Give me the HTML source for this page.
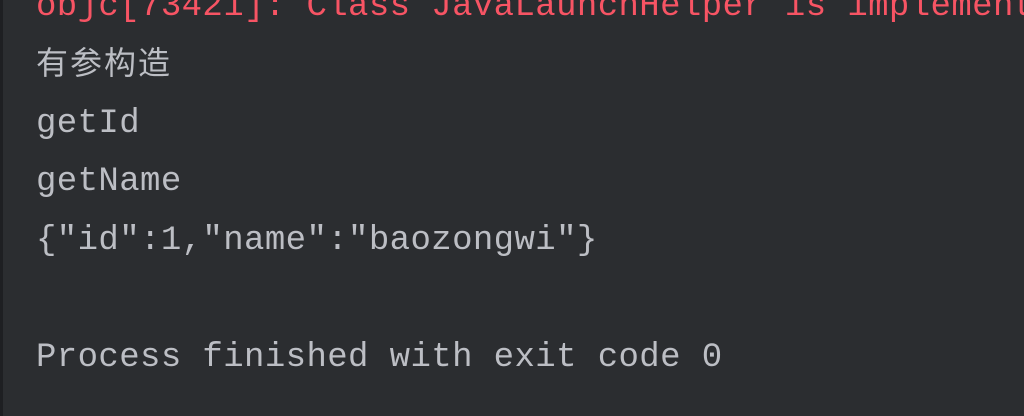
<!DOCTYPE html>
<html><head><meta charset="utf-8"><style>
html,body{margin:0;padding:0}
body{width:1024px;height:416px;background:#2b2d30;overflow:hidden;position:relative;
font-family:"Liberation Mono","Noto Sans CJK SC",monospace;font-size:34px;letter-spacing:0.4px;color:#bcbec4}
.strip{position:absolute;left:0;top:0;width:3px;height:416px;background:#1e1f22}
.l{position:absolute;left:36px;height:58px;line-height:58px;white-space:pre;width:988px;overflow:hidden}
.r{color:#f75464}
.cjk{font-family:"Noto Sans CJK SC",sans-serif;font-size:32px;letter-spacing:2px;line-height:58px}
</style></head><body>
<div class="strip"></div>
<div class="l r" style="top:-22px">objc[73421]: Class JavaLaunchHelper is implemented</div>
<div class="l" style="top:32px"><span class="cjk">有参构造</span></div>
<div class="l" style="top:95px">getId</div>
<div class="l" style="top:153px">getName</div>
<div class="l" style="top:212px">{"id":1,"name":"baozongwi"}</div>
<div class="l" style="top:329px">Process finished with exit code 0</div>
</body></html>
